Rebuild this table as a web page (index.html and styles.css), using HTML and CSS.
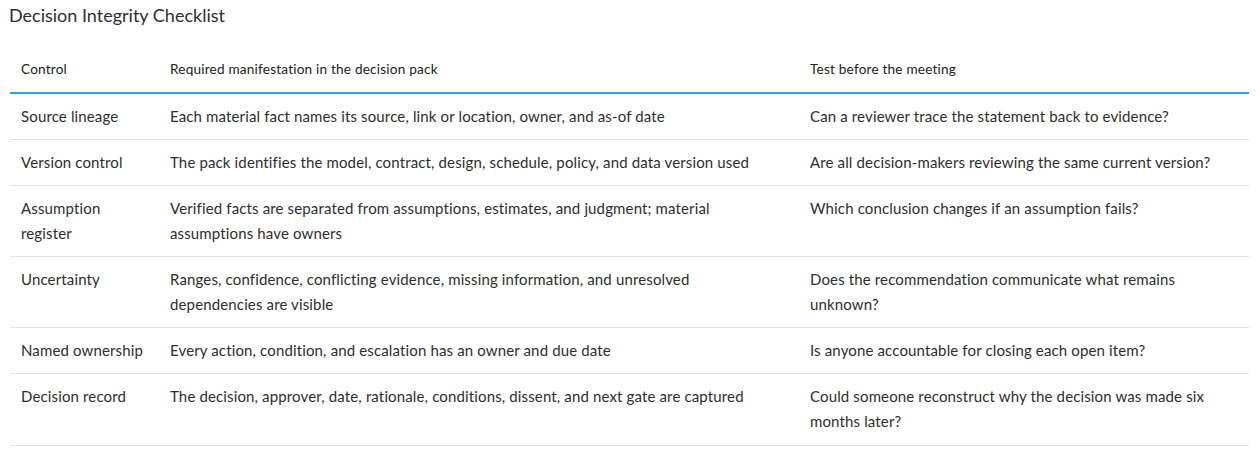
FILE: index.html
```html
<!DOCTYPE html>
<html>
<head>
<meta charset="utf-8">
<link rel="stylesheet" href="styles.css">
</head>
<body>
<div class="page">
  <h2 class="title">Decision Integrity Checklist</h2>
  <table class="checklist">
    <thead>
      <tr>
        <th class="c1">Control</th>
        <th class="c2">Required manifestation in the decision pack</th>
        <th class="c3">Test before the meeting</th>
      </tr>
    </thead>
    <tbody>
      <tr>
        <td>Source lineage</td>
        <td>Each material fact names its source, link or location, owner, and as-of date</td>
        <td>Can a reviewer trace the statement back to evidence?</td>
      </tr>
      <tr>
        <td>Version control</td>
        <td>The pack identifies the model, contract, design, schedule, policy, and data version used</td>
        <td>Are all decision-makers reviewing the same current version?</td>
      </tr>
      <tr>
        <td>Assumption register</td>
        <td>Verified facts are separated from assumptions, estimates, and judgment; material assumptions have owners</td>
        <td>Which conclusion changes if an assumption fails?</td>
      </tr>
      <tr>
        <td>Uncertainty</td>
        <td>Ranges, confidence, conflicting evidence, missing information, and unresolved dependencies are visible</td>
        <td>Does the recommendation communicate what remains unknown?</td>
      </tr>
      <tr>
        <td>Named ownership</td>
        <td>Every action, condition, and escalation has an owner and due date</td>
        <td>Is anyone accountable for closing each open item?</td>
      </tr>
      <tr class="last">
        <td>Decision record</td>
        <td>The decision, approver, date, rationale, conditions, dissent, and next gate are captured</td>
        <td>Could someone reconstruct why the decision was made six months later?</td>
      </tr>
    </tbody>
  </table>
</div>
</body>
</html>
```

FILE: styles.css
```css
html, body {
  margin: 0;
  padding: 0;
  background: #ffffff;
}

body {
  font-family: "Source Sans Pro", Lato, "Noto Sans", sans-serif;
  color: #2e2e2e;
}

.page {
  padding: 3px 12px 0 10px;
}

.title {
  margin: 0 0 0 -1px;
  font-size: 18px;
  font-weight: 400;
  line-height: 24px;
  color: #2e2e2e;
}

.checklist {
  width: 1239px;
  border-collapse: collapse;
  table-layout: fixed;
  margin-top: 19px;
}

.checklist th {
  font-size: 13.6px;
  letter-spacing: 0.2px;
  font-weight: 400;
  text-align: left;
  color: #222222;
  padding: 12px 11px 12px 11px;
  line-height: 22px;
  border-bottom: 2px solid #2aa6de;
  vertical-align: middle;
}

.checklist .c1 { width: 127px; }
.checklist .c2 { width: 618px; }

.checklist td {
  font-size: 15px;
  letter-spacing: 0.14px;
  line-height: 25px;
  padding: 10px 14px 10px 11px;
  vertical-align: top;
  border-bottom: 1px solid #e3e3e3;
  color: #2e2e2e;
}

.checklist .last td {
  padding-bottom: 11px;
}
```
